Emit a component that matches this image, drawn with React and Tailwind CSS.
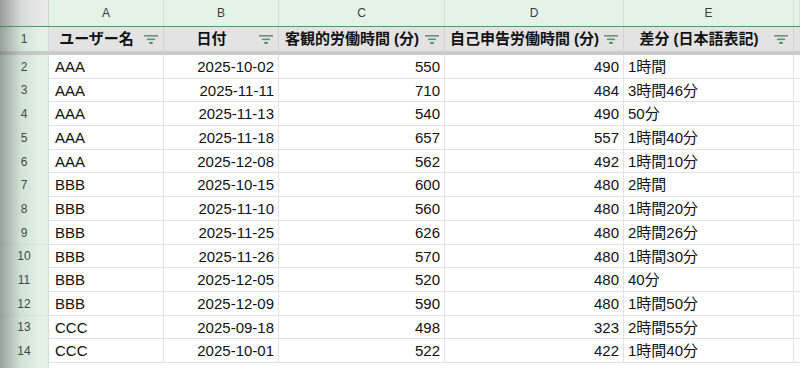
import React from 'react';

const rows = [
  ['AAA', '2025-10-02', 550, 490, '1時間'],
  ['AAA', '2025-11-11', 710, 484, '3時間46分'],
  ['AAA', '2025-11-13', 540, 490, '50分'],
  ['AAA', '2025-11-18', 657, 557, '1時間40分'],
  ['AAA', '2025-12-08', 562, 492, '1時間10分'],
  ['BBB', '2025-10-15', 600, 480, '2時間'],
  ['BBB', '2025-11-10', 560, 480, '1時間20分'],
  ['BBB', '2025-11-25', 626, 480, '2時間26分'],
  ['BBB', '2025-11-26', 570, 480, '1時間30分'],
  ['BBB', '2025-12-05', 520, 480, '40分'],
  ['BBB', '2025-12-09', 590, 480, '1時間50分'],
  ['CCC', '2025-09-18', 498, 323, '2時間55分'],
  ['CCC', '2025-10-01', 522, 422, '1時間40分'],
];

const grid = 'grid grid-cols-[49px_115px_115px_166px_179px_170px_1fr]';
const font = { fontFamily: '"Liberation Sans", Arial, "Noto Sans CJK JP", sans-serif' };

function FilterIcon() {
  return (
    <svg width="14" height="9" viewBox="0 0 14 9" className="shrink-0">
      <rect x="0" y="0" width="14" height="1.6" fill="#6f8f78" />
      <rect x="3" y="3.5" width="8" height="1.6" fill="#5c9470" />
      <rect x="5.3" y="7" width="3.4" height="1.8" fill="#2e8b4f" />
    </svg>
  );
}

function HeadCell({ label }) {
  return (
    <div className="flex items-center bg-[#e3e3e3] border-r border-[#d2d2d2] pr-[5px]">
      <span className="flex-1 text-center font-bold text-[15px] text-[#111] whitespace-nowrap overflow-hidden">
        {label}
      </span>
      <FilterIcon />
    </div>
  );
}

export default function App() {
  return (
    <div className="relative w-[800px] h-[368px] overflow-hidden bg-white" style={font}>
      {/* column letters */}
      <div className={`${grid} h-[27px] border-b-[1.5px] border-[#3fa463]`}>
        <div className="bg-[#e9e9e9] border-r border-[#cfcfcf]" />
        {['A', 'B', 'C', 'D', 'E', ''].map((c, i) => (
          <div
            key={i}
            className="flex items-center justify-center bg-[#e3f3e7] border-r border-[#cde2d3] text-[12px] text-[#3c3c3c]"
          >
            {c}
          </div>
        ))}
      </div>

      {/* header row */}
      <div className={`${grid} h-[28px] border-b-[4px] border-[#cbcbcb]`}>
        <div className="flex items-center justify-center bg-[#e3f3e7] border-r border-[#cde2d3] text-[12px] text-[#3c3c3c]">
          1
        </div>
        <HeadCell label="ユーザー名" />
        <HeadCell label="日付" />
        <HeadCell label="客観的労働時間 (分)" />
        <HeadCell label="自己申告労働時間 (分)" />
        <HeadCell label="差分 (日本語表記)" />
        <div className="bg-[#e3e3e3]" />
      </div>

      {/* data rows */}
      {rows.map((r, i) => (
        <div key={i} className={`${grid} h-[23.7px] border-b border-[#e2e2e2] text-[15px] text-[#111]`}>
          <div className="flex items-center justify-center bg-[#e3f3e7] border-r border-[#cde2d3] text-[12px] text-[#3c3c3c]">
            {i + 2}
          </div>
          <div className="flex items-center pl-[6px] pt-px border-r border-[#e2e2e2]">{r[0]}</div>
          <div className="flex items-center justify-end pr-[4px] pt-px border-r border-[#e2e2e2]">{r[1]}</div>
          <div className="flex items-center justify-end pr-[4px] pt-px border-r border-[#e2e2e2]">{r[2]}</div>
          <div className="flex items-center justify-end pr-[4px] pt-px border-r border-[#e2e2e2]">{r[3]}</div>
          <div className="flex items-center pl-[4px] pt-px border-r border-[#e2e2e2]">{r[4]}</div>
          <div />
        </div>
      ))}
      <div className={`${grid} h-[24px]`}>
        <div className="bg-[#e3f3e7] border-r border-[#cde2d3]" />
      </div>

      {/* left-edge shading from the photo */}
      <div className="pointer-events-none absolute left-0 top-0 h-full w-[42px] bg-gradient-to-r from-[rgba(85,95,90,0.55)] via-[rgba(120,130,125,0.15)] to-transparent" />
    </div>
  );
}
